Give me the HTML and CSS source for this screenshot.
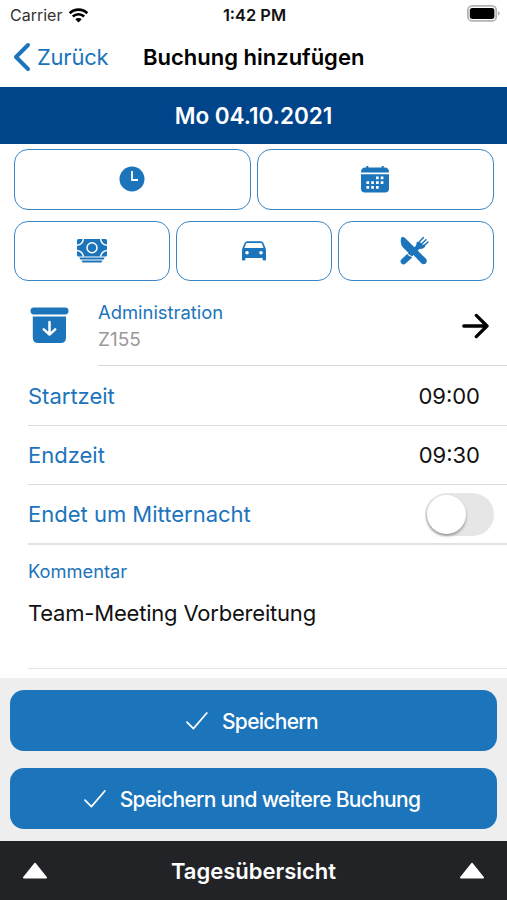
FILE: index.html
```html
<!DOCTYPE html>
<html lang="de">

<head>
    <meta charset="UTF-8">
    <title>Buchung hinzufügen</title>
    <link rel="stylesheet" href="styles.css">
</head>

<body>
    <div class="status">
        <div class="status-left">
            <span class="carrier">Carrier</span>
            <svg class="wifi" width="21" height="15" viewBox="0 0 20 15">
                <path d="M1.2 5.2 A12.6 12.6 0 0 1 18.8 5.2" fill="none" stroke="#000" stroke-width="2.7" />
                <path d="M4.3 8.5 A8.2 8.2 0 0 1 15.7 8.5" fill="none" stroke="#000" stroke-width="2.5" />
                <path d="M10 14.4 L6.8 11.2 A4.6 4.6 0 0 1 13.2 11.2 Z" />
            </svg>
        </div>
        <span class="clock">1:42 PM</span>
        <div class="status-right">
            <svg width="33" height="17" viewBox="0 0 33 17">
                <rect x="0.9" y="0.9" width="28.4" height="15" rx="4.5" fill="#fff" stroke="#b4b4b4" stroke-width="1.8" />
                <rect x="2.8" y="2.9" width="24.6" height="11" rx="2.6" />
                <path d="M31 6 Q32.8 7 32.8 8.4 Q32.8 9.8 31 10.8 Z" fill="#b4b4b4" />
            </svg>
        </div>
    </div>

    <header class="nav">
        <a class="back">
            <svg width="18" height="30" viewBox="0 0 18 30">
                <path d="M15 3 L3 15 L15 27" fill="none" stroke="#1c74bb" stroke-width="4" stroke-linecap="round" stroke-linejoin="round" />
            </svg>
            <span>Zurück</span>
        </a>
        <h1>Buchung hinzufügen</h1>
    </header>

    <div class="date"><span>Mo 04.10.2021</span></div>

    <div class="types">
        <button class="wide">
            <svg width="26" height="26" viewBox="0 0 26 26">
                <circle cx="13" cy="13" r="12.5" fill="#1c74bb" />
                <path d="M13 5 V14 H19" fill="none" stroke="#fff" stroke-width="1.8" />
            </svg>
        </button>
        <button class="wide">
            <svg width="28" height="27" viewBox="0 0 28 27">
                <g fill="#1c74bb">
                    <path d="M5.3 0 H7.3 V1.6 H20.7 V0 H22.7 V1.6 H23.5 Q28 1.8 28 6.4 H0 Q0 1.8 4.5 1.6 H5.3 Z" />
                    <path d="M0 8.3 H28 V22.5 Q28 26.6 24 26.6 H4 Q0 26.6 0 22.5 Z" />
                </g>
                <path d="M15 11.9h2.7M19.7 11.9h2.7M5.4 16.6h2.7M10.2 16.6h2.7M15 16.6h2.7M19.7 16.6h2.7M5.4 21.3h2.7M10.2 21.3h2.7M15 21.3h2.7" stroke="#fff" stroke-width="2.7" />
            </svg>
        </button>
        <button>
            <svg width="30" height="24" viewBox="0 0 30 24">
                <g fill="#1c74bb">
                    <rect x="0" y="0" width="30" height="17.6" rx="1.5" />
                    <path d="M2.3 18.6 H27.7 L26.6 20.5 H3.4 Z" />
                    <path d="M4.5 21.5 H25.5 L24.5 23.5 H5.5 Z" />
                </g>
                <g fill="none" stroke="#fff" stroke-width="1.5">
                    <circle cx="15" cy="8.8" r="5" />
                    <path d="M0 6.3 Q5.6 5.8 6.4 0M23.6 0 Q24.4 5.8 30 6.3M0 11.4 Q5.6 12 6.4 17.6M23.6 17.6 Q24.4 12 30 11.4" />
                </g>
            </svg>
        </button>
        <button>
            <svg width="24" height="20" viewBox="0 0 24 20">
                <path fill="#1c74bb" fill-rule="evenodd" d="M5.4 0.2 H18.6 Q20.7 0.2 21.5 2.2 L23.4 6.8 Q24 8.3 24 9.6 V18.6 Q24 19.5 23.1 19.5 H21.5 Q20.6 19.5 20.6 18.6 V17 H3.4 V18.6 Q3.4 19.5 2.5 19.5 H0.9 Q0 19.5 0 18.6 V9.6 Q0 8.3 0.6 6.8 L2.5 2.2 Q3.3 0.2 5.4 0.2 Z M5 2.1 Q4.3 2.1 4 2.8 L2.4 6.9 H21.6 L20 2.8 Q19.7 2.1 19 2.1 Z M5 10 A1.8 1.8 0 1 0 5 13.6 A1.8 1.8 0 1 0 5 10 Z M19 10 A1.8 1.8 0 1 0 19 13.6 A1.8 1.8 0 1 0 19 10 Z" />
            </svg>
        </button>
        <button>
            <svg class="cutlery" width="29" height="29" viewBox="0 0 29 29">
                <g fill="none" stroke="#1c74bb" stroke-linecap="round">
                    <path d="M3.6 25.4 L9.6 19.8" stroke-width="6" />
                    <path d="M11 18 L20 9" stroke-width="4.6" />
                    <path d="M18 7.4 Q17 10.6 19.2 11.2 Q21.6 12.2 23.8 10" stroke-width="3" />
                    <path d="M18.2 7 L23.4 1.6M20.8 8.8 L26 3.8M23.2 10.4 L28 6" stroke-width="1.5" />
                </g>
                <path d="M1.4 1.2 Q3 0.4 4.8 1.8 L16.6 13.6 L26 22.8 Q27.6 25 26 27.2 Q24 29 21.6 27.6 L14.4 20 Q13.4 18.6 12.3 19.4 Q11.2 19.8 10.2 18.6 L3 11.6 Q-0.6 7 1.4 1.2 Z" fill="#1c74bb" />
                <path d="M7.2 17.3 Q9.6 20.6 12.6 20.7 L14 20.3" fill="none" stroke="#fff" stroke-width="1.1" />
            </svg>
        </button>
    </div>

    <div class="project">
        <svg width="39" height="37" viewBox="0 0 39 37">
            <rect x="0.5" y="0.5" width="38" height="7" rx="3.4" fill="#1c74bb" />
            <path d="M2.8 9.6 H36 V30.5 Q36 36 30.5 36 H8.3 Q2.8 36 2.8 30.5 Z" fill="#1c74bb" />
            <path d="M19.5 15 V27.5 M13.8 22.3 L19.5 27.6 L25.2 22.3" fill="none" stroke="#fff" stroke-width="2.5" stroke-linecap="round" stroke-linejoin="round" />
        </svg>
        <div class="project-row">
            <div>
                <div class="project-name">Administration</div>
                <div class="project-id">Z155</div>
            </div>
            <svg class="arrow" width="27" height="26" viewBox="0 0 27 26">
                <path d="M1.8 13 H24.5 M14.3 2.4 L25 13 L14.3 23.6" fill="none" stroke="#000" stroke-width="3.3" stroke-linecap="round" stroke-linejoin="round" />
            </svg>
        </div>
    </div>

    <div class="row">
        <label>Startzeit</label>
        <span class="time">09:00</span>
    </div>
    <div class="row">
        <label>Endzeit</label>
        <span class="time">09:30</span>
    </div>
    <div class="row last">
        <label>Endet um Mitternacht</label>
        <div class="toggle"></div>
    </div>

    <div class="comment">
        <div class="comment-label">Kommentar</div>
        <div class="comment-text">Team-Meeting Vorbereitung</div>
    </div>

    <div class="actions">
        <button class="save">
            <svg width="22" height="18" viewBox="0 0 22 18">
                <path d="M1 10.2 L7.4 16.6 L20.8 1" fill="none" stroke="#fff" stroke-width="1.7" stroke-linecap="round" stroke-linejoin="round" />
            </svg>
            <span>Speichern</span>
        </button>
        <button class="save">
            <svg width="22" height="18" viewBox="0 0 22 18">
                <path d="M1 10.2 L7.4 16.6 L20.8 1" fill="none" stroke="#fff" stroke-width="1.7" stroke-linecap="round" stroke-linejoin="round" />
            </svg>
            <span>Speichern und weitere Buchung</span>
        </button>
    </div>

    <footer class="overview">
        <svg width="26" height="18" viewBox="0 0 26 18">
            <path d="M13 1.8 L24 15.6 H2 Z" fill="#fff" stroke="#fff" stroke-width="2" stroke-linejoin="round" />
        </svg>
        <span>Tagesübersicht</span>
        <svg width="26" height="18" viewBox="0 0 26 18">
            <path d="M13 1.8 L24 15.6 H2 Z" fill="#fff" stroke="#fff" stroke-width="2" stroke-linejoin="round" />
        </svg>
    </footer>
</body>

</html>
```
FILE: styles.css
```css
* {
    margin: 0;
    padding: 0;
    box-sizing: border-box;
}

body {
    width: 507px;
    height: 900px;
    overflow: hidden;
    display: flex;
    flex-direction: column;
    background-color: #fff;
    font-family: Inter, "Liberation Sans", sans-serif;
    font-size: 22px;
    color: #111;
}

svg {
    display: block;
    flex: none;
}

button {
    font-family: inherit;
    cursor: pointer;
}

/* status bar */
.status {
    height: 30px;
    display: grid;
    grid-template-columns: 1fr auto 1fr;
    align-items: center;
    padding: 0 8px 0 10px;
    font-size: 16px;
}

.status-left {
    display: flex;
    align-items: center;
    gap: 6px;
    color: #333;
}

.clock {
    font-size: 16.4px;
    font-weight: 600;
}

.status-right {
    display: flex;
    justify-content: flex-end;
    margin-right: -1px;
    padding-bottom: 3px;
}

/* navigation */
.nav {
    height: 57px;
    display: flex;
    align-items: center;
    padding: 0 0 3px 13px;
}

.back {
    width: 130px;
    display: flex;
    align-items: center;
    gap: 6px;
    color: #1c74bb;
    letter-spacing: -0.25px;
}

h1 {
    font-size: 22px;
    font-weight: 600;
    color: #000;
}

.date {
    height: 57px;
    line-height: 58px;
    background-color: #00448a;
    color: #fff;
    font-size: 22.5px;
    font-weight: 600;
    text-align: center;
}

/* booking types */
.types {
    display: grid;
    grid-template-columns: repeat(6, 1fr);
    grid-template-rows: 61px 60px;
    gap: 11px 6px;
    padding: 5px 13px 0 14px;
    height: 141px;
}

.types button {
    grid-column: span 2;
    display: flex;
    align-items: center;
    justify-content: center;
    padding: 0 1px 1px 0;
    background-color: #fff;
    border: 1.5px solid #3a85c4;
    border-radius: 14px;
}

.types .wide {
    grid-column: span 3;
}

.types .cutlery {
    margin-right: 2px;
}

/* project */
.project {
    height: 81px;
    display: flex;
    align-items: center;
    padding-left: 30px;
    gap: 29px;
}

.project-row {
    flex: 1;
    height: 81px;
    display: flex;
    align-items: center;
    justify-content: space-between;
    padding: 2px 18px 0 0;
    border-bottom: 1px solid #d8d8d8;
}

.project-name {
    font-size: 18.4px;
    line-height: 28px;
    color: #1c74bb;
}

.project-id {
    font-size: 19px;
    line-height: 28px;
    color: #999;
}

/* form rows */
.row {
    height: 59.5px;
    margin-left: 28px;
    padding: 1px 27px 0 0;
    display: flex;
    align-items: center;
    justify-content: space-between;
    border-bottom: 1px solid #dcdcdc;
}

.row label {
    color: #1c74bb;
}

.last {
    padding-right: 13px;
    border-bottom: 2px solid #e2e2e2;
}

.toggle {
    width: 69px;
    height: 43px;
    padding: 2px;
    border-radius: 22px;
    background-color: #e6e6e6;
}

.toggle::before {
    content: "";
    display: block;
    width: 39px;
    height: 39px;
    border-radius: 50%;
    background-color: #fff;
    box-shadow: 0 2px 3px rgba(0, 0, 0, 0.35);
}

.comment {
    height: 124px;
    margin-left: 28px;
    padding-top: 14px;
    border-bottom: 1px solid #e4e4e4;
}

.comment-label {
    font-size: 18.3px;
    line-height: 24px;
    color: #1c74bb;
}

.comment-text {
    margin-top: 14px;
    line-height: 32px;
    letter-spacing: -0.2px;
}

/* save buttons */
.actions {
    height: 163px;
    margin-top: 9px;
    padding: 12px 10px;
    display: flex;
    flex-direction: column;
    gap: 17px;
    background-color: #eee;
}

.save {
    height: 61px;
    flex: none;
    display: flex;
    align-items: center;
    justify-content: center;
    gap: 14px;
    padding: 2px 3px 0 0;
    border: none;
    border-radius: 14px;
    background-color: #1c74bb;
    color: #fff;
    font-size: 21px;
    font-weight: 500;
    letter-spacing: -0.7px;
}

.overview {
    height: 59px;
    flex: none;
    display: flex;
    align-items: center;
    justify-content: space-between;
    padding: 2px 22px 0;
    background-color: #222327;
    color: #fff;
    font-weight: 600;
}
```
